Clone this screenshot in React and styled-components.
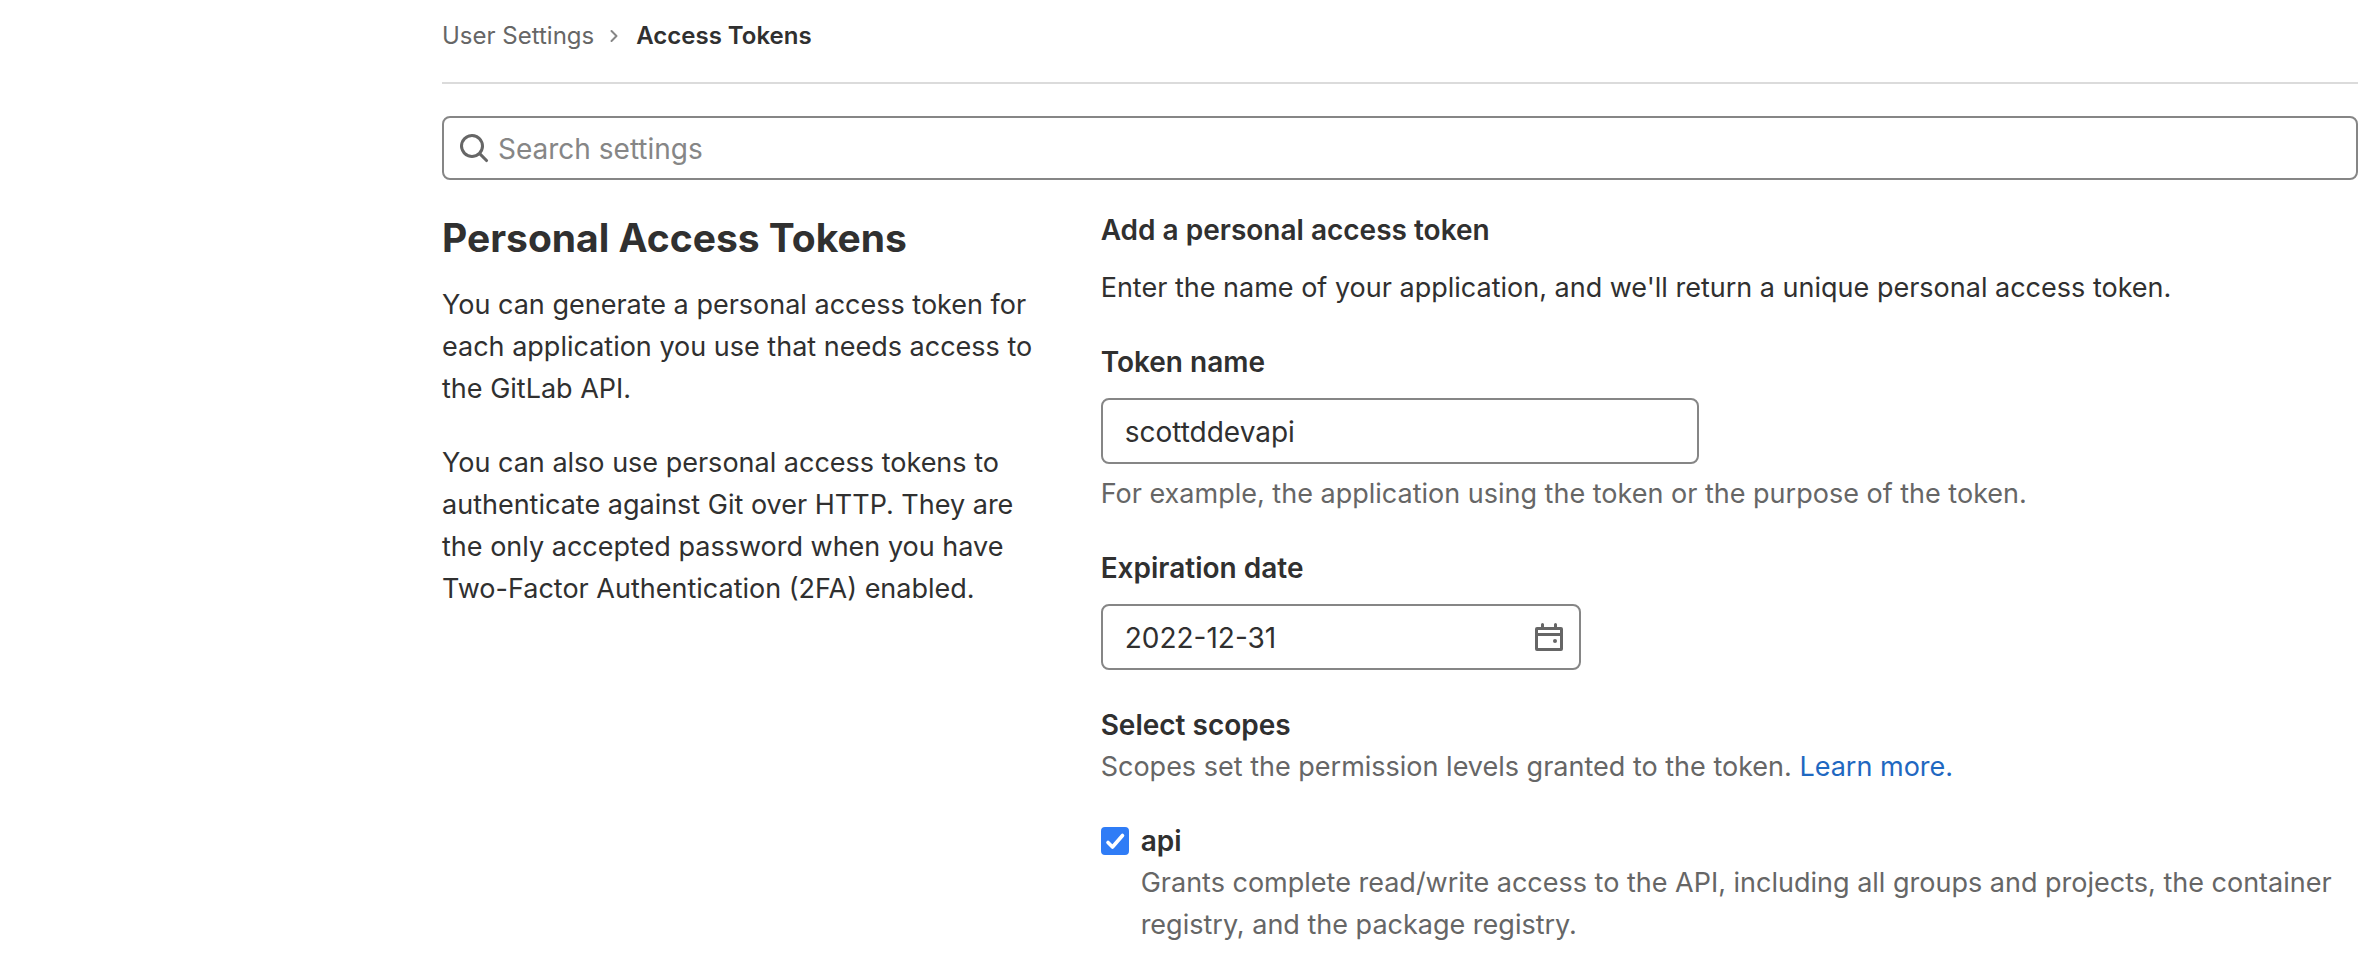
import React, { useState } from "react";
import styled, { createGlobalStyle } from "styled-components";

const GlobalStyle = createGlobalStyle`
  *, *::before, *::after { box-sizing: border-box; }
  body {
    margin: 0;
    background: #fff;
    color: #303030;
    font-family: Inter, "Liberation Sans", sans-serif;
    font-size: 27px;
    line-height: 42px;
  }
  input, button { font: inherit; color: inherit; }
`;

const Page = styled.div`
  padding: 0 8px 24px 442px;
`;

const Breadcrumbs = styled.nav`
  display: flex;
  align-items: center;
  height: 84px;
  padding-bottom: 10px;
  border-bottom: 2px solid #dbdbdb;
  font-size: 24px;
`;

const Crumb = styled.a`
  color: ${(p) => (p.$current ? "#303030" : "#666")};
  font-weight: ${(p) => (p.$current ? 600 : 400)};
  text-decoration: none;
`;

const CrumbArrow = styled.svg`
  width: 8px;
  height: 14px;
  margin: 0 18px 0 16px;
`;

const fieldBorder = "2px solid #868686";

const SearchBox = styled.label`
  display: flex;
  align-items: center;
  gap: 8px;
  height: 64px;
  margin-top: 32px;
  padding-left: 14px;
  border: ${fieldBorder};
  border-radius: 8px;
`;

const Icon = styled.svg`
  display: block;
  flex: none;
  width: 32px;
  height: 32px;
  fill: #666;
`;

const BareInput = styled.input`
  flex: 1;
  min-width: 0;
  padding: 2px 0 0;
  border: 0;
  outline: 0;
  background: transparent;
  font-size: 28px;
  &::placeholder { color: #868686; opacity: 1; }
`;

const Columns = styled.main`
  display: grid;
  grid-template-columns: repeat(3, minmax(0, 1fr));
  column-gap: 60px;
  margin-top: 29px;
`;

const Intro = styled.section`
  display: flex;
  flex-direction: column;
`;

const Title = styled.h1`
  margin: 0 0 17px;
  font-size: 39px;
  line-height: 58px;
  font-weight: 700;
`;

const Text = styled.p`
  margin: 0;
  color: ${(p) => (p.$muted ? "#666" : "inherit")};
`;

const IntroText = styled(Text)`
  & + & { margin-top: 32px; }
`;

const Form = styled.form`
  grid-column: span 2;
  display: flex;
  flex-direction: column;
  gap: 32px;
`;

const Heading = styled.h2`
  margin: 0 0 ${(p) => p.$space || 0}px;
  font-size: 28px;
  font-weight: 600;
`;

const Field = styled.div`
  display: grid;
  grid-template-columns: repeat(2, minmax(0, 1fr));
  column-gap: 60px;
`;

const Label = styled.label`
  grid-column: 1 / -1;
  margin-bottom: 15px;
  font-size: 28px;
  font-weight: 600;
`;

const InputBox = styled.div`
  display: flex;
  align-items: center;
  width: ${(p) => p.$width || "100%"};
  max-width: 100%;
  height: 66px;
  padding: 0 14px 0 22px;
  border: ${fieldBorder};
  border-radius: 8px;
  background: #fff;
`;

const Help = styled(Text)`
  grid-column: 1 / -1;
  margin-top: 9px;
`;

const IconButton = styled.button`
  padding: 0;
  border: 0;
  background: none;
`;

const Link = styled.a`
  color: #1f68c1;
  text-decoration: none;
`;

const Scopes = styled.div`
  display: flex;
  flex-direction: column;
  gap: 32px;
  padding-top: 2px;
`;

const Scope = styled.div`
  display: grid;
  grid-template-columns: 28px minmax(0, 1fr);
  column-gap: 12px;
`;

const CheckCell = styled.span`
  display: grid;
  align-content: center;
  height: 42px;
  > * { grid-area: 1 / 1; }
`;

const CheckBox = styled.input`
  appearance: none;
  width: 28px;
  height: 28px;
  margin: 0;
  border: ${fieldBorder};
  border-radius: 4px;
  background: #fff;
  &:checked { border-color: #2f7cf6; background: #2f7cf6; }
`;

const CheckMark = styled.svg`
  width: 28px;
  height: 28px;
  pointer-events: none;
  fill: none;
  stroke: #fff;
  stroke-width: 3.6;
  stroke-linecap: round;
  stroke-linejoin: round;
`;

const ScopeLabel = styled.label`
  font-size: 28px;
  font-weight: 600;
`;

const ScopeHelp = styled(Text)`
  grid-column: 2;
`;

export default function App() {
  const [name, setName] = useState("scottddevapi");
  const [date, setDate] = useState("2022-12-31");
  const [api, setApi] = useState(true);

  return (
    <>
      <GlobalStyle />
      <Page>
        <Breadcrumbs aria-label="Breadcrumbs">
          <Crumb href="#settings">User Settings</Crumb>
          <CrumbArrow viewBox="0 0 8 14" fill="none" stroke="#868686" strokeWidth="2" strokeLinecap="round" strokeLinejoin="round" aria-hidden="true">
            <path d="M1.5 2 6.5 7l-5 5" />
          </CrumbArrow>
          <Crumb href="#tokens" $current aria-current="page">Access Tokens</Crumb>
        </Breadcrumbs>

        <SearchBox>
          <Icon viewBox="0 0 16 16" aria-hidden="true">
            <path fillRule="evenodd" d="M11.5 7a4.5 4.5 0 1 1-9 0 4.5 4.5 0 0 1 9 0Zm-.82 4.74a6 6 0 1 1 1.06-1.06l3.04 3.04a.75.75 0 1 1-1.06 1.06l-3.04-3.04Z" clipRule="evenodd" />
          </Icon>
          <BareInput type="text" placeholder="Search settings" aria-label="Search settings" />
        </SearchBox>

        <Columns>
          <Intro>
            <Title>Personal Access Tokens</Title>
            <IntroText>You can generate a personal access token for each application you use that needs access to the GitLab API.</IntroText>
            <IntroText>You can also use personal access tokens to authenticate against Git over HTTP. They are the only accepted password when you have Two-Factor Authentication (2FA) enabled.</IntroText>
          </Intro>

          <Form onSubmit={(e) => e.preventDefault()}>
            <div>
              <Heading $space={16}>Add a personal access token</Heading>
              <Text>Enter the name of your application, and we'll return a unique personal access token.</Text>
            </div>

            <Field>
              <Label htmlFor="token-name">Token name</Label>
              <InputBox>
                <BareInput id="token-name" type="text" value={name} onChange={(e) => setName(e.target.value)} />
              </InputBox>
              <Help $muted>For example, the application using the token or the purpose of the token.</Help>
            </Field>

            <Field>
              <Label htmlFor="expires">Expiration date</Label>
              <InputBox $width="480px">
                <BareInput id="expires" type="text" value={date} onChange={(e) => setDate(e.target.value)} />
                <IconButton type="button" aria-label="Open calendar">
                  <Icon viewBox="0 0 32 32">
                    <path fillRule="evenodd" d="M8 3.500a1.500 1.500 0 0 1 3 0V6h10V3.500a1.500 1.500 0 0 1 3 0V6h4a2 2 0 0 1 2 2v20a2 2 0 0 1-2 2H4a2 2 0 0 1-2-2V8a2 2 0 0 1 2-2h4ZM5 9v3h22V9ZM5 15v12h22V15Z" />
                    <circle cx="22" cy="20" r="2" />
                  </Icon>
                </IconButton>
              </InputBox>
            </Field>

            <Scopes role="group" aria-labelledby="scopes-title">
              <div>
                <Heading id="scopes-title">Select scopes</Heading>
                <Text $muted>
                  Scopes set the permission levels granted to the token. <Link href="#scopes">Learn more.</Link>
                </Text>
              </div>

              <Scope>
                <CheckCell>
                  <CheckBox id="scope-api" type="checkbox" checked={api} onChange={(e) => setApi(e.target.checked)} />
                  {api && (
                    <CheckMark viewBox="0 0 28 28" aria-hidden="true">
                      <path d="M7 15.500l4.500 4.500L21.500 8.500" />
                    </CheckMark>
                  )}
                </CheckCell>
                <ScopeLabel htmlFor="scope-api">api</ScopeLabel>
                <ScopeHelp $muted>
                  Grants complete read/write access to the API, including all groups and projects, the container registry, and the package registry.
                </ScopeHelp>
              </Scope>
            </Scopes>
          </Form>
        </Columns>
      </Page>
    </>
  );
}
